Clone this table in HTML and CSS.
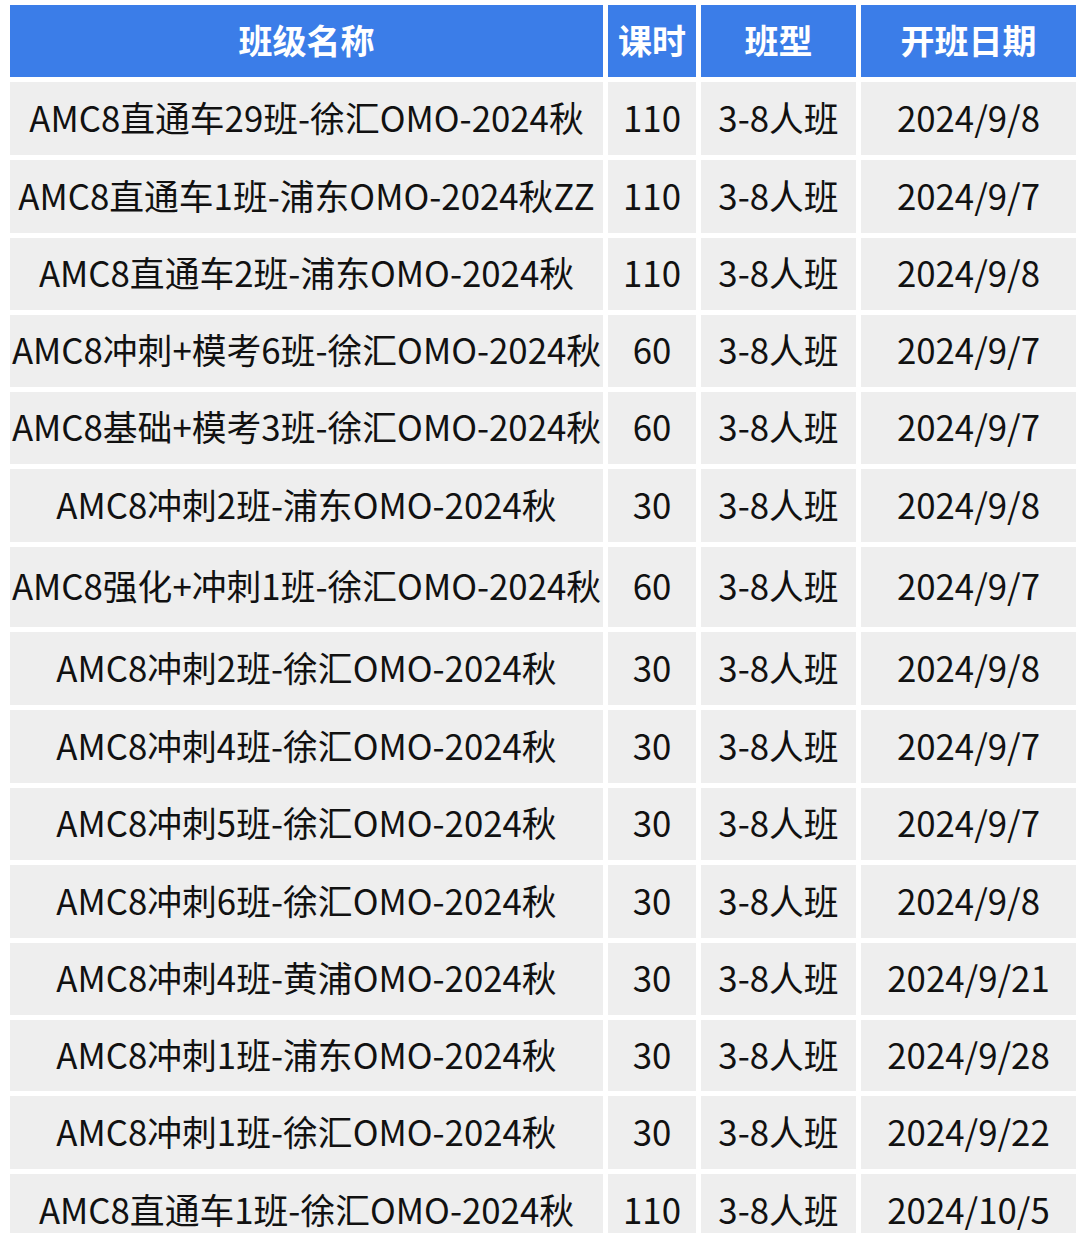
FILE: index.html
```html
<!DOCTYPE html>
<html lang="zh-CN">
<head>
<meta charset="utf-8">
<title>AMC8 班级</title>
<link rel="stylesheet" href="styles.css">
</head>
<body>
<div class="table">
  <div class="cell head">班级名称</div><div class="cell head">课时</div><div class="cell head">班型</div><div class="cell head">开班日期</div>
  <div class="cell">AMC8直通车29班-徐汇OMO-2024秋</div><div class="cell">110</div><div class="cell">3-8人班</div><div class="cell">2024/9/8</div>
  <div class="cell">AMC8直通车1班-浦东OMO-2024秋ZZ</div><div class="cell">110</div><div class="cell">3-8人班</div><div class="cell">2024/9/7</div>
  <div class="cell">AMC8直通车2班-浦东OMO-2024秋</div><div class="cell">110</div><div class="cell">3-8人班</div><div class="cell">2024/9/8</div>
  <div class="cell">AMC8冲刺+模考6班-徐汇OMO-2024秋</div><div class="cell">60</div><div class="cell">3-8人班</div><div class="cell">2024/9/7</div>
  <div class="cell">AMC8基础+模考3班-徐汇OMO-2024秋</div><div class="cell">60</div><div class="cell">3-8人班</div><div class="cell">2024/9/7</div>
  <div class="cell">AMC8冲刺2班-浦东OMO-2024秋</div><div class="cell">30</div><div class="cell">3-8人班</div><div class="cell">2024/9/8</div>
  <div class="cell">AMC8强化+冲刺1班-徐汇OMO-2024秋</div><div class="cell">60</div><div class="cell">3-8人班</div><div class="cell">2024/9/7</div>
  <div class="cell">AMC8冲刺2班-徐汇OMO-2024秋</div><div class="cell">30</div><div class="cell">3-8人班</div><div class="cell">2024/9/8</div>
  <div class="cell">AMC8冲刺4班-徐汇OMO-2024秋</div><div class="cell">30</div><div class="cell">3-8人班</div><div class="cell">2024/9/7</div>
  <div class="cell">AMC8冲刺5班-徐汇OMO-2024秋</div><div class="cell">30</div><div class="cell">3-8人班</div><div class="cell">2024/9/7</div>
  <div class="cell">AMC8冲刺6班-徐汇OMO-2024秋</div><div class="cell">30</div><div class="cell">3-8人班</div><div class="cell">2024/9/8</div>
  <div class="cell">AMC8冲刺4班-黄浦OMO-2024秋</div><div class="cell">30</div><div class="cell">3-8人班</div><div class="cell">2024/9/21</div>
  <div class="cell">AMC8冲刺1班-浦东OMO-2024秋</div><div class="cell">30</div><div class="cell">3-8人班</div><div class="cell">2024/9/28</div>
  <div class="cell">AMC8冲刺1班-徐汇OMO-2024秋</div><div class="cell">30</div><div class="cell">3-8人班</div><div class="cell">2024/9/22</div>
  <div class="cell">AMC8直通车1班-徐汇OMO-2024秋</div><div class="cell">110</div><div class="cell">3-8人班</div><div class="cell">2024/10/5</div>
</div>
</body>
</html>
```
FILE: styles.css
```css
html, body {
  margin: 0;
  padding: 0;
  background: #ffffff;
  overflow: hidden;
}
body {
  font-family: "Noto Sans CJK SC", "Noto Sans", sans-serif;
  color: #111111;
}
.table {
  display: grid;
  grid-template-columns: 593px 88px 155px 215px;
  grid-template-rows: 72px 73px 73px 72px 72px 72px 73px 80px 73px 73px 72px 73px 72px 71px 73px 73px;
  gap: 5px;
  padding: 5px 0 0 10px;
}
.cell {
  background: #eeeeee;
  display: flex;
  align-items: center;
  justify-content: center;
  padding-bottom: 3px;
  box-sizing: border-box;
  font-size: 34.8px;
  line-height: 1;
  white-space: nowrap;
  overflow: visible;
}
.head {
  background: #3b7de8;
  color: #ffffff;
  font-size: 34px;
  font-weight: 700;
}
```
